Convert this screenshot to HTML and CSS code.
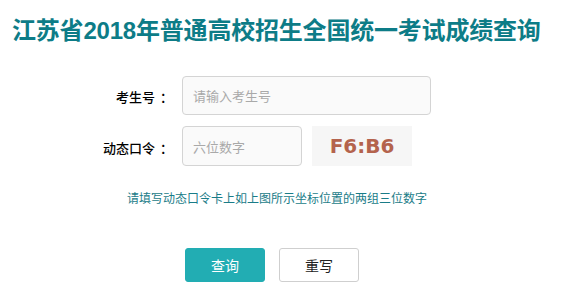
FILE: index.html
```html
<!DOCTYPE html>
<html lang="zh-CN">
<head>
<meta charset="utf-8">
<title>江苏省2018年普通高校招生全国统一考试成绩查询</title>
<link rel="stylesheet" href="styles.css">
</head>
<body>
<h1 class="title">江苏省2018年普通高校招生全国统一考试成绩查询</h1>
<form class="form">
  <div class="row">
    <label class="label">考生号<span class="colon">：</span></label>
    <input class="field field-wide" type="text" placeholder="请输入考生号">
  </div>
  <div class="row row-second">
    <label class="label">动态口令<span class="colon">：</span></label>
    <input class="field field-short" type="text" placeholder="六位数字">
    <div class="captcha">F6:B6</div>
  </div>
  <p class="hint">请填写动态口令卡上如上图所示坐标位置的两组三位数字</p>
  <div class="actions">
    <button class="btn btn-primary" type="button">查询</button>
    <button class="btn btn-reset" type="reset">重写</button>
  </div>
</form>
</body>
</html>
```
FILE: styles.css
```css
html, body {
  margin: 0;
  padding: 0;
  background: #fff;
}
body {
  font-family: "Liberation Sans", "Noto Sans CJK SC", sans-serif;
  width: 564px;
  height: 292px;
  overflow: hidden;
}
.title {
  margin: 0;
  padding: 16px 0 0 12px;
  font-size: 24px;
  line-height: 30px;
  font-weight: bold;
  color: #0d7c87;
  letter-spacing: -0.2px;
}
.form {
  margin: 30px 0 0 0;
  display: flex;
  flex-direction: column;
}
.row {
  display: flex;
  align-items: center;
  height: 39px;
}
.row-second {
  margin-top: 11px;
  height: 40px;
}
.label {
  width: 168px;
  display: flex;
  justify-content: flex-end;
  align-items: center;
  font-family: "Noto Sans CJK SC", sans-serif;
  font-size: 13px;
  font-weight: 500;
  color: #000;
  padding-top: 2px;
  box-sizing: border-box;
}
.colon {
  display: inline-block;
  width: 9px;
  margin-left: 4px;
  overflow: visible;
  white-space: nowrap;
  text-indent: 1px;
}
.field {
  margin-left: 14px;
  height: 100%;
  box-sizing: border-box;
  border: 1px solid #d4d4d4;
  border-radius: 4px;
  background: #fafafa;
  padding: 0 10px;
  font-family: "Noto Sans CJK SC", sans-serif;
  font-size: 13px;
  color: #333;
  outline: none;
}
.field::placeholder {
  color: #a9a9a9;
}
.field-wide {
  width: 249px;
}
.field-short {
  width: 120px;
}
.captcha {
  margin-left: 10px;
  width: 100px;
  height: 40px;
  background: #f6f6f6;
  display: flex;
  align-items: center;
  justify-content: center;
  font-family: "DejaVu Sans", sans-serif;
  font-weight: bold;
  font-size: 20px;
  color: #b4634d;
}
.hint {
  margin: 24px 0 0 127px;
  font-size: 12px;
  line-height: 18px;
  color: #1a7c88;
}
.actions {
  margin-top: 40px;
  margin-left: 185px;
  display: flex;
  gap: 14px;
}
.btn {
  width: 80px;
  height: 34px;
  box-sizing: border-box;
  border-radius: 3px;
  font-family: "Noto Sans CJK SC", sans-serif;
  font-size: 14px;
  padding: 0;
  cursor: pointer;
}
.btn-primary {
  background: #22adb3;
  border: 1px solid #22adb3;
  color: #fff;
}
.btn-reset {
  background: #fff;
  border: 1px solid #cfcfcf;
  color: #222;
}
```
